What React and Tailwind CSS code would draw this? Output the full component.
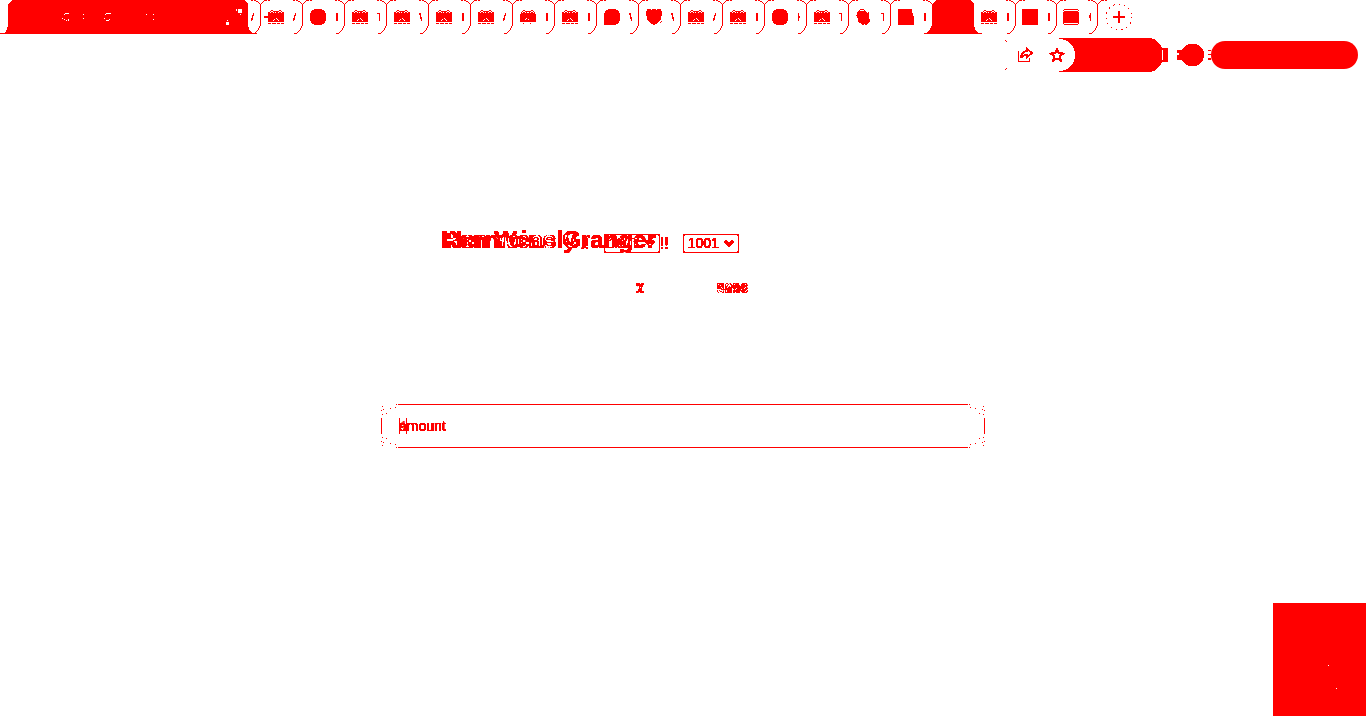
import React from "react";

/* Draws a small bitmap: every "#" is one filled pixel. */
function Bits({ rows, className = "" }) {
  const width = Math.max(...rows.map((r) => r.length));
  let d = "";
  rows.forEach((row, y) => {
    for (const m of row.matchAll(/#+/g)) {
      d += `M${m.index} ${y}h${m[0].length}v1h-${m[0].length}z`;
    }
  });
  return (
    <svg width={width} height={rows.length} viewBox={`0 0 ${width} ${rows.length}`} shapeRendering="crispEdges" className={className} aria-hidden="true">
      <path d={d} fill="#ff0000" />
    </svg>
  );
}

const FACE = [
  "...##......##...",
  "..#..######..#..",
  "##.##.#.##.##.##",
  "################",
  "################",
  "################",
  "################",
  "################",
  "########.#######",
  "######.##.######",
  "#####.####.#####",
  "################",
  "................",
  "###.####.###.###",
];

const FACE_ROUND = [
  "...##......##...",
  "..#..######..#..",
  ".#.##.#..#.##.#.",
  ".##############.",
  "################",
  "################",
  "################",
  "################",
  "######.#########",
  "#####.##.#######",
  "################",
  "################",
  "................",
  "...#......#.....",
];

const DISC = [
  "....########....",
  "..############..",
  ".##############.",
  ".##############.",
  "################",
  "################",
  "################",
  "################",
  "################",
  "################",
  "################",
  "################",
  ".##############.",
  ".##############.",
  "..############..",
  "....########....",
];

const BUBBLE = [
  "....########....",
  "..############..",
  ".##############.",
  ".##############.",
  "################",
  "################",
  "################",
  "################",
  "################",
  "################",
  "################",
  "################",
  "###############.",
  "###############.",
  "##############..",
  "############....",
];

const SHIELD = [
  ".####.####.####.",
  ".##############.",
  "################",
  "################",
  "################",
  "################",
  "################",
  ".##############.",
  ".##############.",
  ".##############.",
  ".##############.",
  "..############..",
  "...##########..#",
  "....########..#.",
  ".....######.....",
  ".......##.......",
];

const BLOB = [
  "....####........",
  "...#....#.......",
  "..########......",
  ".##########.#...",
  ".############...",
  ".############...",
  "#############...",
  ".############...",
  ".############...",
  "..###########...",
  "..############..",
  "..############..",
  "..############..",
  "...##########...",
  ".....#######....",
  "......##.##.....",
];

const NOTCH = [
  "##############..",
  "##############..",
  "##############..",
  "##############..",
  "###############.",
  "###############.",
  "###############.",
  "################",
  "################",
  "################",
  "################",
  "################",
  "################",
  "################",
  "################",
  "################",
];

const SQUARE = Array(16).fill("################");

const CARD = [
  ".##############.",
  "#..............#",
  ".##############.",
  "################",
  "################",
  "################",
  "################",
  "################",
  "################",
  "################",
  "################",
  "################",
  "################",
  "################",
  "#..............#",
  ".##############.",
];

const PLUS_FACE = FACE.map((row, i) => (i === 6 || i === 7 ? "####" + row : "...." + row));

const MARKS = {
  slash: ["..#", "..#", ".##", ".#.", ".#.", "##.", "##.", "#.."],
  back: ["##.", "##.", ".#.", ".#.", ".##", ".##", "..#", "..#"],
  bar: ["##", "##", "##", "##", "##", "##", "##", "##"],
  seven: ["###", "..#", "..#", "..#", "..#", "..#", "..#", "..#"],
  tee: ["#.", "#.", "#.", "##", "##", "#.", "#.", "#."],
  arrow: [".#", ".#", "##", "##", "##", ".#", ".#", ".#"],
};

const TABS = [
  [PLUS_FACE, "slash"],
  [DISC, "bar"],
  [FACE, "seven"],
  [FACE, "back"],
  [FACE, "bar"],
  [FACE, "slash"],
  [FACE_ROUND, "bar"],
  [FACE, "bar"],
  [BUBBLE, "back"],
  [SHIELD, "back"],
  [FACE, "slash"],
  [FACE, "bar"],
  [DISC, "tee"],
  [FACE, "seven"],
  [BLOB, "seven"],
  [NOTCH, "bar"],
  [null, null],
  [FACE, "bar", true],
  [SQUARE, "bar", true],
  [CARD, "arrow", true],
];

/* Outline of one tab: vertical edge, flared foot and the two bevels at the top. */
function TabEdge() {
  return (
    <svg width="20" height="34" viewBox="0 0 20 34" shapeRendering="crispEdges" className="absolute top-0 -right-2.5 z-10" aria-hidden="true">
      <path
        fill="#ff0000"
        d="M1 0h2v1h-2zM4 0h2v1h-2zM7 1h1v1h-1zM6 1h1v1h-1zM8 2h1v1h-1zM9 3h1v1h-1zM10 4h1v22h-1zM11 3h1v1h-1zM12 2h1v1h-1zM13 1h1v1h-1zM14 0h3v1h-3zM18 0h2v1h-2zM9 26h1v2h-1zM8 28h1v2h-1zM7 30h1v1h-1zM6 31h1v1h-1zM5 32h1v1h-1zM2 33h3v1h-3z"
      />
    </svg>
  );
}

function FilledTab() {
  return (
    <button type="button" aria-label="Tab" className="relative h-[34px] w-[42px] shrink-0">
      <svg width="58" height="34" viewBox="0 0 58 34" className="absolute top-0 -left-2" aria-hidden="true" shapeRendering="crispEdges">
        <path fill="#ff0000" d="M0 34v-1h3l3-2 2-5V4l4-4h34l4 4v22l2 5 3 2h3v1z" />
      </svg>
    </button>
  );
}

function Tab({ icon, mark, narrow }) {
  return (
    <button
      type="button"
      aria-label="Tab"
      className={`relative flex h-[34px] shrink-0 items-center justify-between pr-1.5 ${narrow ? "w-[41px] pl-[7px]" : "w-[42px] pl-2"}`}
    >
      <Bits rows={icon} className={icon === PLUS_FACE ? "-ml-1" : ""} />
      <Bits rows={MARKS[mark]} />
      <TabEdge />
    </button>
  );
}

function ActiveTab() {
  return (
    <button type="button" aria-label="Current tab" className="relative flex h-[34px] w-[260px] shrink-0 items-center justify-end pr-1.5">
      <svg width="257" height="34" viewBox="0 0 257 34" shapeRendering="crispEdges" className="absolute top-0 left-0" aria-hidden="true">
        <path fill="#ff0000" d="M0 34v-1h4l2-2 2-5V4l4-4h232l4 4v22l2 5 3 2h4v1z" />
        <path
          fill="#ffffff"
          d="M65 13h4v1h-4zM64 14h1v1h-1zM62 18h1v1h-1zM64 19h1v1h-1zM66 20h1v1h-1zM68 19h1v2h-1zM83 14h1v1h-1zM83 18h1v1h-1zM106 13h5v1h-5zM105 14h1v1h-1zM104 18h1v1h-1zM106 20h3v1h-3zM109 19h1v1h-1zM146 14h1v1h-1zM153 14h1v1h-1zM153 19h1v1h-1zM238 9h4v4h-4zM236 9h1v2h-1zM240 14h1v1h-1zM226 22h3v3h-3zM227 20h1v1h-1z"
        />
      </svg>
      <Bits rows={MARKS.slash} />
      <TabEdge />
    </button>
  );
}

function TabStrip() {
  return (
    <nav className="flex h-[34px] overflow-hidden">
      <ActiveTab />
      {TABS.map(([icon, mark, narrow], i) =>
        icon ? <Tab key={i} icon={icon} mark={mark} narrow={narrow} /> : <FilledTab key={i} />
      )}
      <button type="button" aria-label="New tab" className="ml-2 flex h-[34px] w-7 shrink-0 items-center justify-center">
        <svg width="28" height="28" viewBox="0 0 28 28" shapeRendering="crispEdges" aria-hidden="true">
          <path d="M13 8h2v5h5v2h-5v5h-2v-5H8v-2h5z" fill="#ff0000" />
          <circle cx="14" cy="14" r="13" fill="none" stroke="#ff0000" strokeDasharray="1.500 4" />
        </svg>
      </button>
    </nav>
  );
}

function Toolbar() {
  return (
    <div className="flex h-[42px] items-center justify-end pr-2">
      <svg width="2" height="30" viewBox="0 0 2 30" shapeRendering="crispEdges" className="mr-2.5" aria-hidden="true">
        <path fill="#ff0000" d="M0 0h1v1h-1zM1 1h1v1h-1zM1 28h1v1h-1zM0 29h1v1h-1z" />
      </svg>
      <button type="button" aria-label="Share" className="mr-4 flex size-4 items-center justify-center">
        <svg width="16" height="16" viewBox="0 0 16 16" fill="none" stroke="#ff0000" strokeWidth="2" shapeRendering="crispEdges" aria-hidden="true">
          <path d="M1.500 4v10.500h11V11" strokeWidth="1" />
          <path d="M10 2 15 6l-5 4V8C7 8 5 9 4 11 4 7 6.500 4.500 10 4z" />
        </svg>
      </button>
      <button type="button" aria-label="Bookmark" className="flex size-4 items-center justify-center">
        <svg width="16" height="16" viewBox="0 0 16 16" fill="none" stroke="#ff0000" strokeWidth="2" shapeRendering="crispEdges" aria-hidden="true">
          <path d="M8 2l1.700 4.200 4.500.3-3.500 2.900 1.200 4.400L8 11.400l-3.900 2.400 1.200-4.400L1.800 6.500l4.500-.3z" />
        </svg>
      </button>
      <button type="button" aria-label="Extensions" className="-ml-1.5 h-[34px] w-[110px]">
        <svg width="110" height="34" viewBox="0 0 110 34" shapeRendering="crispEdges" aria-hidden="true">
          <path fill="#ff0000" d="M0 0h92a17 17 0 0 1 11 10h6v14h-6A17 17 0 0 1 92 34H0v-1A16 16 0 0 0 0 1z" />
          <path fill="#ffffff" d="M103 12h1v10h-1z" />
        </svg>
      </button>
      <button type="button" aria-label="Profile" className="ml-2 h-[22px] w-7">
        <svg width="28" height="22" viewBox="0 0 28 22" shapeRendering="crispEdges" aria-hidden="true">
          <path fill="#ff0000" d="M0 6h5v10H0v-5h2V9H0z" />
          <rect x="4" y="0" width="23" height="22" rx="10" fill="#ff0000" />
        </svg>
      </button>
      <button type="button" aria-label="Menu" className="ml-[3px] flex h-7 items-center">
        <Bits rows={["###", "...", "...", "...", "###", "...", "...", "...", "###", "###"]} />
        <span className="h-7 w-[147px] rounded-full bg-[#ff0000]" />
      </button>
    </div>
  );
}

function AccountSelect({ value, id }) {
  return (
    <span className="mt-1.5 grid items-center">
      <select id={id} aria-label="Account" defaultValue={value} className="col-start-1 row-start-1 h-[19px] w-14 appearance-none rounded-xs border border-black bg-white pl-1 text-sm leading-4 text-black">
        <option>{value}</option>
      </select>
      <svg width="12" height="8" viewBox="0 0 12 8" className="pointer-events-none col-start-1 row-start-1 mr-1 justify-self-end" fill="none" stroke="#000" strokeWidth="2" aria-hidden="true">
        <path d="M2 2l4 4 4-4" />
      </svg>
    </span>
  );
}

function Greeting({ name, account, className = "" }) {
  return (
    <div className={`col-start-1 row-start-1 flex items-center bg-white text-black ${className}`}>
      <strong className="text-2xl leading-7 font-bold">{name}</strong>
      <span className="mt-2 mr-3.5 ml-1 text-base leading-5">!!</span>
      <AccountSelect value={account} id={`account-${account}`} />
    </div>
  );
}

function Summary({ account, balance, className = "" }) {
  return (
    <div className={`col-start-1 row-start-1 flex gap-[73px] bg-white text-sm leading-4 font-bold text-black ${className}`}>
      <span>{account}</span>
      <span>{balance}</span>
    </div>
  );
}

const CORNER = "M16 0h1v1h-1zM10 4h1v1h-1zM15 3h1v1h-1zM3 5h1v1h-1zM2 2h1v1h-1zM6 9h1v1h-1zM1 6h1v1h-1zM2 10h1v1h-1z";

function FieldEnd({ flip = "" }) {
  return (
    <svg width="18" height="44" viewBox="0 0 18 44" shapeRendering="crispEdges" className={`shrink-0 ${flip}`} fill="#ff0000" aria-hidden="true">
      <path d={CORNER} />
      <path d={CORNER} transform="translate(0 44) scale(1 -1)" />
      <path d="M1 14h1v16h-1z" />
    </svg>
  );
}

export default function App() {
  return (
    <div className="flex min-h-screen flex-col bg-white font-['Liberation_Sans',Arial,sans-serif] text-[#ff0000]">
      {/* Turns every non-black pixel of a blended group red and the rest white. */}
      <svg width="0" height="0" className="absolute" aria-hidden="true">
        <filter id="delta" x="0" y="0" width="100%" height="100%" colorInterpolationFilters="sRGB">
          <feColorMatrix values="0 0 0 0 1  -40 0 0 0 1.8  -40 0 0 0 1.8  0 0 0 0 1" />
        </filter>
        <filter id="solid" x="0" y="0" width="100%" height="100%" colorInterpolationFilters="sRGB">
          <feColorMatrix values="0 0 0 0 1  0 0 0 0 0  0 0 0 0 0  0 0 0 30 -0.8" />
        </filter>
      </svg>
      <header>
        <TabStrip />
        <Toolbar />
      </header>
      <main className="flex grow flex-col">
        <div className="mx-auto mt-[150px] w-full max-w-[484px]">
          <div className="isolate grid w-fit filter-[url(#delta)]">
            <Greeting name="Hermoine Granger" account="1001" className="pl-1" />
            <Greeting name="Ron Weasly" account="1007" className="mix-blend-difference" />
          </div>
        </div>
        <div className="mx-auto mt-[26px] flex w-full max-w-[480px] pl-[193px]">
          <div className="isolate grid w-fit filter-[url(#delta)]">
            <Summary account="1" balance="5096" />
            <Summary account="7" balance="3214" className="mix-blend-difference" />
          </div>
        </div>
        <div className="mx-auto mt-[108px] flex h-11 w-full max-w-[606px]">
          <FieldEnd />
          <div className="relative flex grow items-center border-y border-[#ff0000]">
            <input
              type="text"
              aria-label="amount"
              placeholder="amount"
              className="w-full bg-transparent pl-px text-sm leading-5 filter-[url(#solid)] outline-none placeholder:text-[#ff0000] placeholder:opacity-100"
            />
            <span className="absolute left-px h-4 w-2 border-x border-[#ff0000] text-center text-sm leading-4">1</span>
          </div>
          <FieldEnd flip="-scale-x-100" />
        </div>
        <aside className="mt-auto mb-3 self-end">
          <svg width="93" height="113" viewBox="0 0 93 113" shapeRendering="crispEdges" aria-hidden="true">
            <path fill="#ff0000" d="M0 0h93v113H0z" />
            <path fill="#ffffff" d="M55 62h1v1h-1zM63 85h1v1h-1z" />
          </svg>
        </aside>
      </main>
    </div>
  );
}
